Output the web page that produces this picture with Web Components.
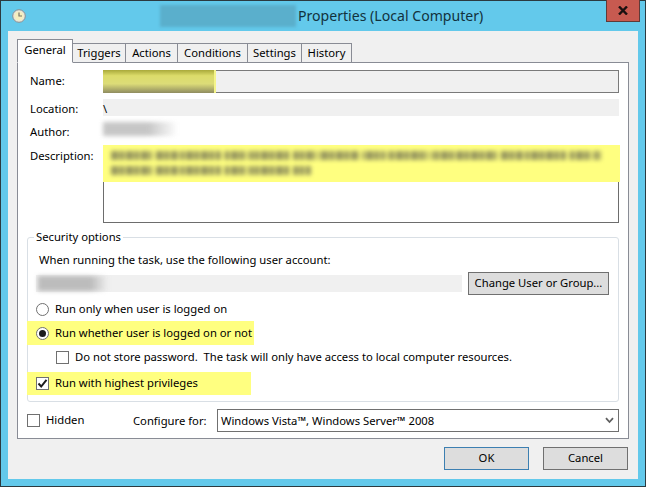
<!DOCTYPE html>
<html>
<head>
<meta charset="utf-8">
<title>Properties</title>
<style>
    html, body { margin: 0; padding: 0; background: #63c9eb; }
    body { font: 11.25px "Noto Sans", "Open Sans", sans-serif; color: #000; }
</style>
</head>
<body>
<task-dialog>
    <span slot="title">Properties (Local Computer)</span>
    <tab-strip>
        <tab-item width="56" selected>General</tab-item>
        <tab-item width="53">Triggers</tab-item>
        <tab-item width="52">Actions</tab-item>
        <tab-item width="70">Conditions</tab-item>
        <tab-item width="54">Settings</tab-item>
        <tab-item width="50">History</tab-item>
    </tab-strip>
    <tab-panel>
        <form-row label="Name:" height="23" drop="1">
            <name-field></name-field>
        </form-row>
        <form-row label="Location:" height="17" gap="6">
            <read-field width="100%">\</read-field>
        </form-row>
        <form-row label="Author:" height="17" gap="6">
            <smudge-bar width="75" height="14" tone="#b4b4b4"></smudge-bar>
        </form-row>
        <form-row label="Description:" height="78" gap="6" drop="1">
            <description-box></description-box>
        </form-row>
        <group-box legend="Security options">
            <div style="padding: 0 0 0 3px; line-height: 16px;">When running the task, use the following user account:</div>
            <account-row></account-row>
            <option-row kind="radio">Run only when user is logged on</option-row>
            <option-row kind="radio" checked marked width="227">Run whether user is logged on or not</option-row>
            <option-row kind="check" indent>Do not store password.&nbsp; The task will only have access to local computer resources.</option-row>
            <option-row kind="check" checked marked tail width="224">Run with highest privileges</option-row>
        </group-box>
        <configure-row></configure-row>
    </tab-panel>
    <win-button slot="actions" focused>OK</win-button>
    <win-button slot="actions">Cancel</win-button>
</task-dialog>

<script>
class TaskDialog extends HTMLElement {
    constructor() {
        super();
        this.attachShadow({ mode: "open" }).innerHTML = `
            <style>
                :host { display: flex; flex-direction: column; box-sizing: border-box; width: 646px; height: 487px;
                    border: 1px solid #2b3a40; background: #63c9eb; padding: 0 7px 7px 7px; }
                .title { height: 30px; display: flex; align-items: center; position: relative; flex: none; }
                .icon { width: 14px; height: 14px; margin-left: 4px; flex: none; }
                .smudge { width: 136px; height: 22px; margin-left: 134px; background: #5aafcc; filter: blur(1.5px); flex: none; }
                .text { display: block; font-size: 14.1px; margin-left: 2px; padding-bottom: 2px; color: #12323d; white-space: nowrap; }
                .close { position: absolute; top: -1px; right: -2px; width: 34px; height: 22px; box-sizing: border-box;
                    background: #c75a50; border: 1px solid #5f3a38; border-top: 0; display: flex; align-items: center; justify-content: center; }
                .client { flex: 1; background: #f0f0f0; padding: 9px 9px 9px 9px; display: flex; flex-direction: column; }
                .actions { display: flex; justify-content: flex-end; gap: 14px; margin-top: 8px; padding-right: 1px; }
            </style>
            <div class="title">
                <svg class="icon" viewBox="0 0 14 14">
                    <circle cx="7" cy="7" r="6.3" fill="#e8e6da" stroke="#8a8f92"/>
                    <circle cx="7" cy="7" r="4.6" fill="#f6eebf"/>
                    <path d="M7 3.5V7H10" fill="none" stroke="#77766a" stroke-width="1.2"/>
                </svg>
                <div class="smudge"></div>
                <slot name="title" class="text"></slot>
                <div class="close">
                    <svg width="10" height="9" viewBox="0 0 10 9"><path d="M1 .5L9 8.5M9 .5L1 8.5" stroke="#1a1010" stroke-width="2.4"/></svg>
                </div>
            </div>
            <div class="client">
                <slot></slot>
                <div class="actions"><slot name="actions"></slot></div>
            </div>
        `;
    }
}

class TabStrip extends HTMLElement {
    constructor() {
        super();
        this.attachShadow({ mode: "open" }).innerHTML = `
            <style>
                :host { display: flex; align-items: flex-end; height: 23px; margin-bottom: -1px; position: relative; z-index: 1; }
            </style>
            <slot></slot>
        `;
    }
}

class TabItem extends HTMLElement {
    constructor() {
        super();
        this.attachShadow({ mode: "open" }).innerHTML = `
            <style>
                :host { display: flex; box-sizing: border-box; height: 20px; background: #f0f0f0; border: 1px solid #898c95;
                    border-left-width: 0; align-items: center; justify-content: center; padding-bottom: 2px; }
                :host([selected]) { height: 24px; background: #fff; border-left-width: 1px; border-bottom-color: #fff; align-items: flex-start; padding: 2px 0 0; }
            </style>
            <slot></slot>
        `;
        this.style.width = this.getAttribute("width") + "px";
    }
}

class TabPanel extends HTMLElement {
    constructor() {
        super();
        this.attachShadow({ mode: "open" }).innerHTML = `
            <style>
                :host { display: block; box-sizing: border-box; height: 377px; background: #fff; border: 1px solid #898c95; padding: 7px 9px 0 9px; }
            </style>
            <slot></slot>
        `;
    }
}

class FormRow extends HTMLElement {
    constructor() {
        super();
        this.attachShadow({ mode: "open" }).innerHTML = `
            <style>
                :host { display: flex; }
                .label { width: 76px; flex: none; padding: ${this.getAttribute("drop") || 0}px 0 0 3px; box-sizing: border-box; line-height: 20px; }
                .value { flex: 1; min-width: 0; display: flex; }
            </style>
            <div class="label">${this.getAttribute("label")}</div>
            <div class="value"><slot></slot></div>
        `;
        this.style.height = this.getAttribute("height") + "px";
        this.style.marginTop = (this.getAttribute("gap") || 0) + "px";
    }
}

class NameField extends HTMLElement {
    constructor() {
        super();
        this.attachShadow({ mode: "open" }).innerHTML = `
            <style>
                :host { display: block; flex: 1; box-sizing: border-box; background: #f0f0f0; border: 1px solid #7a7a7a; position: relative; }
                .mark { position: absolute; left: -1px; top: -1px; bottom: -1px; width: 113px; overflow: hidden;
                    background: linear-gradient(#a9a93a, #dcdc6a 25%, #dcdc78 60%, #8f8c60); }
                .mark::after { content: ""; position: absolute; right: 0; top: 0; bottom: 0; width: 2px; background: #f4f48a; }
            </style>
            <div class="mark"></div>
        `;
    }
}

class ReadField extends HTMLElement {
    constructor() {
        super();
        this.attachShadow({ mode: "open" }).innerHTML = `
            <style>
                :host { display: block; flex: 1; background: #f0f0f0; line-height: 19px; }
            </style>
            <slot></slot>
        `;
    }
}

class SmudgeBar extends HTMLElement {
    constructor() {
        super();
        const tone = this.getAttribute("tone");
        this.attachShadow({ mode: "open" }).innerHTML = `
            <style>
                :host { display: block; flex: none; background: linear-gradient(90deg, ${tone} 60%, transparent); filter: blur(2px); opacity: .75; }
            </style>
        `;
        this.style.width = this.getAttribute("width") + "px";
        this.style.height = this.getAttribute("height") + "px";
    }
}

class DescriptionBox extends HTMLElement {
    constructor() {
        super();
        this.attachShadow({ mode: "open" }).innerHTML = `
            <style>
                :host { display: block; flex: 1; box-sizing: border-box; background: #fff; border: 1px solid #6d6d6d; }
                .mark { height: 37px; margin: -1px -2px 0 -1px; background: #ffff80; padding: 6px 8px 0 8px; box-sizing: border-box; }
                .line { height: 9px; margin-bottom: 6px; filter: blur(2px); opacity: .6;
                    background:
                        repeating-linear-gradient(90deg, transparent 0 41px, #ffff80 41px 44px, transparent 44px 67px, #ffff80 67px 69px),
                        repeating-linear-gradient(90deg, #55554a 0 7px, #a8a860 7px 9px, #55554a 9px 13px, #d0d070 13px 15px); }
                .one { width: 490px; }
                .two { width: 200px; }
            </style>
            <div class="mark">
                <div class="line one"></div>
                <div class="line two"></div>
            </div>
        `;
    }
}

class GroupBox extends HTMLElement {
    constructor() {
        super();
        this.attachShadow({ mode: "open" }).innerHTML = `
            <style>
                :host { display: block; box-sizing: border-box; height: 165px; margin-top: 14px; border: 1px solid #d9dfe5; border-radius: 3px;
                    padding: 14px 0 0 8px; position: relative; }
                .legend { position: absolute; left: 6px; top: -10px; background: #fff; padding: 0 2px; line-height: 17px; }
            </style>
            <div class="legend">${this.getAttribute("legend")}</div>
            <slot></slot>
        `;
    }
}

class AccountRow extends HTMLElement {
    constructor() {
        super();
        this.attachShadow({ mode: "open" }).innerHTML = `
            <style>
                :host { display: flex; align-items: center; height: 23px; margin-top: 4px; padding-right: 9px; margin-bottom: 2px; }
                .field { width: 426px; height: 17px; background: #f0f0f0; margin-right: 6px; padding: 0 0 0 2px; box-sizing: border-box; display: flex; align-items: center; }
                .smudge { width: 70px; height: 15px; background: linear-gradient(90deg, #bcbcbc 75%, transparent); filter: blur(2px); }
                win-button { width: 141px; }
            </style>
            <div class="field"><div class="smudge"></div></div>
            <win-button wide>Change User or Group...</win-button>
        `;
    }
}

class OptionRow extends HTMLElement {
    constructor() {
        super();
        const checked = this.hasAttribute("checked");
        const glyph = this.getAttribute("kind") === "radio"
            ? `<svg width="13" height="13" viewBox="0 0 13 13">
                   <circle cx="6.5" cy="6.5" r="6" fill="#fff" stroke="#707070"/>
                   ${checked ? '<circle cx="6.5" cy="6.5" r="3.5" fill="#1c1c1c"/>' : ""}
               </svg>`
            : `<svg width="13" height="13" viewBox="0 0 13 13">
                   <rect x=".5" y=".5" width="12" height="12" fill="#fff" stroke="#707070"/>
                   ${checked ? '<path d="M2.5 6.5L5.2 9.5L10.5 2.8" fill="none" stroke="#1c1c1c" stroke-width="2"/>' : ""}
               </svg>`;
        this.attachShadow({ mode: "open" }).innerHTML = `
            <style>
                :host { display: flex; box-sizing: border-box; align-items: center; gap: 6px; height: 24px; white-space: nowrap; padding-left: 9px; margin-left: -9px; width: fit-content; }
                :host([marked]) { background: #ffff80; }
                :host([indent]) { padding-left: 29px; }
                :host([tail]) { margin-top: 3px; height: 23px; }
                svg { flex: none; display: block; }
                slot { display: block; padding-bottom: 2px; }
            </style>
            ${glyph}
            <slot></slot>
        `;
        if (this.hasAttribute("width")) this.style.width = this.getAttribute("width") + "px";
    }
}

class ConfigureRow extends HTMLElement {
    constructor() {
        super();
        this.attachShadow({ mode: "open" }).innerHTML = `
            <style>
                :host { display: flex; align-items: center; height: 23px; margin-top: 7px; }
                .hidden { display: flex; align-items: center; gap: 6px; width: 106px; flex: none; margin-top: -1px; }
                .hidden span { padding-bottom: 2px; }
                .label { width: 84px; flex: none; padding-bottom: 1px; }
                .select { flex: 1; height: 23px; box-sizing: border-box; border: 1px solid #707070; display: flex; align-items: center;
                    justify-content: space-between; padding: 0 4px 0 3px; background: #fff; }
                .select span { padding-bottom: 1px; }
                svg { display: block; flex: none; }
            </style>
            <div class="hidden">
                <svg width="13" height="13" viewBox="0 0 13 13"><rect x=".5" y=".5" width="12" height="12" fill="#fff" stroke="#707070"/></svg>
                <span>Hidden</span>
            </div>
            <div class="label">Configure for:</div>
            <div class="select">
                <span>Windows Vista™, Windows Server™ 2008</span>
                <svg width="9" height="7" viewBox="0 0 9 7"><path d="M1 1.2L4.5 5L8 1.2" fill="none" stroke="#606060" stroke-width="1.8"/></svg>
            </div>
        `;
    }
}

class WinButton extends HTMLElement {
    constructor() {
        super();
        this.attachShadow({ mode: "open" }).innerHTML = `
            <style>
                :host { display: flex; box-sizing: border-box; width: 85px; height: 23px; background: #dddddd; border: 1px solid #707070;
                    align-items: center; justify-content: center; white-space: nowrap; flex: none; padding-bottom: 2px; }
                :host([focused]) { border-color: #3c7fb1; }
                :host([wide]) { width: 141px; }
            </style>
            <slot></slot>
        `;
    }
}

customElements.define("task-dialog", TaskDialog);
customElements.define("tab-strip", TabStrip);
customElements.define("tab-item", TabItem);
customElements.define("tab-panel", TabPanel);
customElements.define("form-row", FormRow);
customElements.define("name-field", NameField);
customElements.define("read-field", ReadField);
customElements.define("smudge-bar", SmudgeBar);
customElements.define("description-box", DescriptionBox);
customElements.define("group-box", GroupBox);
customElements.define("account-row", AccountRow);
customElements.define("option-row", OptionRow);
customElements.define("configure-row", ConfigureRow);
customElements.define("win-button", WinButton);
</script>
</body>
</html>
